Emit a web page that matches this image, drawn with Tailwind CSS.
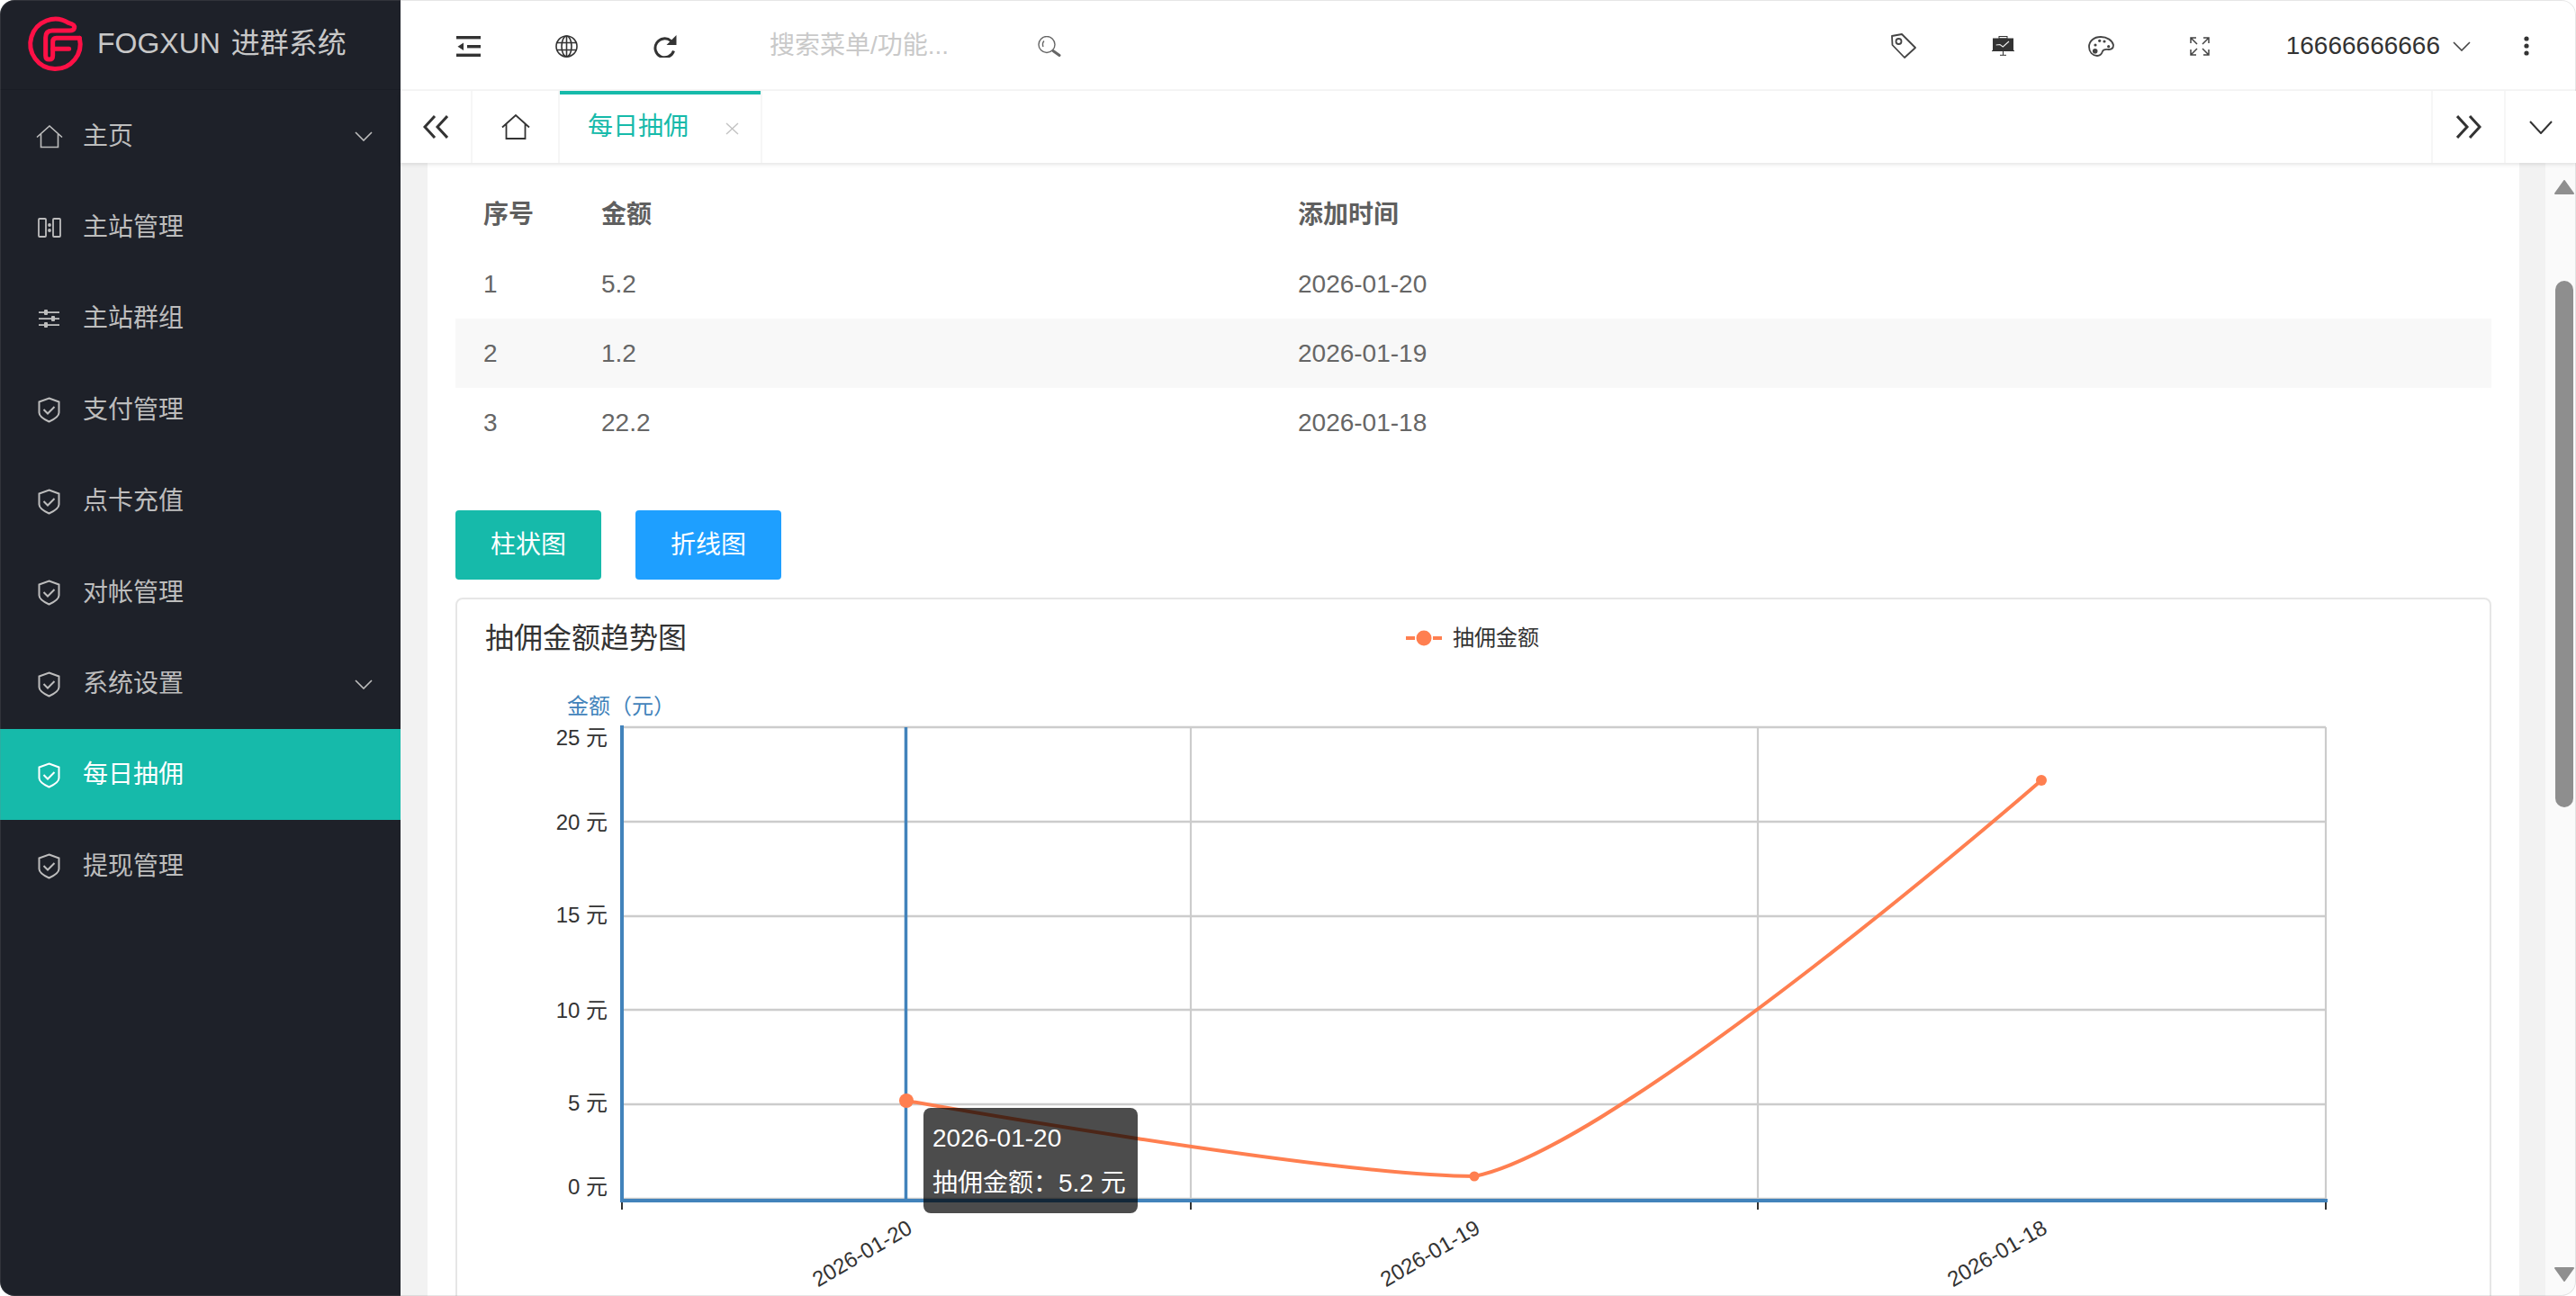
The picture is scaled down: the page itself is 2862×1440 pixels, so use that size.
<!DOCTYPE html>
<html lang="zh-CN">
<head>
    <meta charset="UTF-8">
    <title>每日抽佣</title>
    <script src="https://cdn.jsdelivr.net/npm/@tailwindcss/browser@4"></script>
</head>
<body class="bg-white">
<div class="relative flex w-[2862px] h-[1440px] overflow-hidden rounded-[16px] [font-family:'Liberation_Sans','Noto_Sans_CJK_SC',sans-serif]">

    <!-- sidebar -->
    <aside class="w-[445px] shrink-0 bg-[#1e2129] text-[28px] text-[#bdbdbd]">
        <div class="flex h-[100px] items-center border-b border-[#1a1d24]">
            <svg class="ml-[20px] w-[80px] h-[80px]" viewBox="0 0 240 240" fill="none" stroke="#ff1046" stroke-width="15" stroke-linecap="round" stroke-linejoin="round">
                <path d="M205 97 A83 83 0 1 1 168 46 Q190 52 188 62 Q186 72 172 72 H115 Q92 72 92 95 V155 Q92 168 104 168 Q116 168 116 155 V133 H170"/>
                <path d="M205 97 H128 Q116 97 116 110 V133"/>
            </svg>
            <span class="ml-[8px] mb-[3px] text-[32px] text-[#c8c8c8] [word-spacing:3px]">FOGXUN 进群系统</span>
        </div>
        <nav>
            <a class="flex h-[101.4px] items-center pt-[2px] pl-[40px] pr-[31px]">
                <span class="w-[52px] shrink-0">
                    <svg class="w-[30px] h-[26px]" viewBox="0 0 30 26" fill="none" stroke="currentColor" stroke-width="1.6"><path d="M1 13.5 15 1 29 13.5M5.5 10V24.5H24.5V10"/></svg>
                </span>
                <span>主页</span>
                <svg class="ml-auto w-[20px] h-[11px]" viewBox="0 0 20 11" fill="none" stroke="currentColor" stroke-width="1.6"><path d="M1 1 10 10 19 1"/></svg>
            </a>
            <a class="flex h-[101.4px] items-center pt-[2px] pl-[40px]">
                <span class="w-[52px] shrink-0 pl-[2px]">
                    <svg class="w-[26px] h-[22px]" viewBox="0 0 26 22" fill="none" stroke="currentColor" stroke-width="1.8"><rect x="1" y="1" width="8" height="20" rx="1"/><rect x="17" y="1" width="8" height="20" rx="1"/><circle cx="13" cy="8" r="1" fill="currentColor"/><circle cx="13" cy="14" r="1" fill="currentColor"/></svg>
                </span>
                <span>主站管理</span>
            </a>
            <a class="flex h-[101.4px] items-center pt-[2px] pl-[40px]">
                <span class="w-[52px] shrink-0 pl-[3px]">
                    <svg class="w-[23px] h-[20px]" viewBox="0 0 23 20" fill="currentColor"><rect y="2.2" width="23" height="1.8"/><rect y="9.2" width="23" height="1.8"/><rect y="16.2" width="23" height="1.8"/><rect x="6" y="0" width="4" height="6" rx="1"/><rect x="14" y="7" width="4" height="6" rx="1"/><rect x="6" y="14" width="4" height="6" rx="1"/></svg>
                </span>
                <span>主站群组</span>
            </a>
            <a class="flex h-[101.4px] items-center pt-[2px] pl-[40px]">
                <span class="w-[52px] shrink-0 pl-[2px]">
                    <svg class="w-[25px] h-[29px]" viewBox="0 0 25 29" fill="none" stroke="currentColor" stroke-width="2"><path d="M12.5 1.5 23.5 5.5V17.5C23.5 21.5 18 25 12.5 27.5 7 25 1.5 21.5 1.5 17.5V5.5Z"/><path d="M6.5 14 11 18.5 18.5 11"/></svg>
                </span>
                <span>支付管理</span>
            </a>
            <a class="flex h-[101.4px] items-center pt-[2px] pl-[40px]">
                <span class="w-[52px] shrink-0 pl-[2px]">
                    <svg class="w-[25px] h-[29px]" viewBox="0 0 25 29" fill="none" stroke="currentColor" stroke-width="2"><path d="M12.5 1.5 23.5 5.5V17.5C23.5 21.5 18 25 12.5 27.5 7 25 1.5 21.5 1.5 17.5V5.5Z"/><path d="M6.5 14 11 18.5 18.5 11"/></svg>
                </span>
                <span>点卡充值</span>
            </a>
            <a class="flex h-[101.4px] items-center pt-[2px] pl-[40px]">
                <span class="w-[52px] shrink-0 pl-[2px]">
                    <svg class="w-[25px] h-[29px]" viewBox="0 0 25 29" fill="none" stroke="currentColor" stroke-width="2"><path d="M12.5 1.5 23.5 5.5V17.5C23.5 21.5 18 25 12.5 27.5 7 25 1.5 21.5 1.5 17.5V5.5Z"/><path d="M6.5 14 11 18.5 18.5 11"/></svg>
                </span>
                <span>对帐管理</span>
            </a>
            <a class="flex h-[101.4px] items-center pt-[2px] pl-[40px] pr-[31px]">
                <span class="w-[52px] shrink-0 pl-[2px]">
                    <svg class="w-[25px] h-[29px]" viewBox="0 0 25 29" fill="none" stroke="currentColor" stroke-width="2"><path d="M12.5 1.5 23.5 5.5V17.5C23.5 21.5 18 25 12.5 27.5 7 25 1.5 21.5 1.5 17.5V5.5Z"/><path d="M6.5 14 11 18.5 18.5 11"/></svg>
                </span>
                <span>系统设置</span>
                <svg class="ml-auto w-[20px] h-[11px]" viewBox="0 0 20 11" fill="none" stroke="currentColor" stroke-width="1.6"><path d="M1 1 10 10 19 1"/></svg>
            </a>
            <a class="flex h-[101.4px] items-center pt-[2px] pl-[40px] bg-[#16baaa] text-white">
                <span class="w-[52px] shrink-0 pl-[2px]">
                    <svg class="w-[25px] h-[29px]" viewBox="0 0 25 29" fill="none" stroke="currentColor" stroke-width="2"><path d="M12.5 1.5 23.5 5.5V17.5C23.5 21.5 18 25 12.5 27.5 7 25 1.5 21.5 1.5 17.5V5.5Z"/><path d="M6.5 14 11 18.5 18.5 11"/></svg>
                </span>
                <span>每日抽佣</span>
            </a>
            <a class="flex h-[101.4px] items-center pt-[2px] pl-[40px]">
                <span class="w-[52px] shrink-0 pl-[2px]">
                    <svg class="w-[25px] h-[29px]" viewBox="0 0 25 29" fill="none" stroke="currentColor" stroke-width="2"><path d="M12.5 1.5 23.5 5.5V17.5C23.5 21.5 18 25 12.5 27.5 7 25 1.5 21.5 1.5 17.5V5.5Z"/><path d="M6.5 14 11 18.5 18.5 11"/></svg>
                </span>
                <span>提现管理</span>
            </a>
        </nav>
    </aside>

    <main class="flex min-w-0 flex-1 flex-col bg-[#f2f2f2]">
        <!-- top bar -->
        <header class="flex h-[101px] shrink-0 items-center border-b-2 border-[#f6f6f6] bg-white pt-[3px] pr-[52px] pl-[62px] text-[#333]">
            <svg class="w-[27px] h-[23px]" viewBox="0 0 27 23" fill="currentColor"><rect width="27" height="3.4" y="0"/><rect x="12" y="10" width="15" height="3.4"/><rect y="19.6" width="27" height="3.4"/><path d="M1.5 11.7 8 7.5V16Z"/></svg>
            <svg class="ml-[83px] w-[25px] h-[25px]" viewBox="0 0 25 25" fill="none" stroke="currentColor" stroke-width="1.6"><circle cx="12.5" cy="12.5" r="11.5"/><ellipse cx="12.5" cy="12.5" rx="5.5" ry="11.5"/><path d="M12.5 1V24M1.5 8.5H23.5M1.5 16.5H23.5"/></svg>
            <svg class="ml-[84px] w-[26px] h-[25px]" viewBox="0 0 26 25"><path d="M22.5 17.5A10.5 10.5 0 1 1 19.5 6.5" fill="none" stroke="currentColor" stroke-width="3"/><path d="M25.5 0V11H14.5Z" fill="currentColor"/></svg>
            <span class="ml-[103px] w-[200px] shrink-0 text-[28px] text-[#c9c9c9]">搜索菜单/功能...</span>
            <svg class="ml-[98px] w-[26px] h-[23px]" viewBox="0 0 26 23" fill="none" stroke="#666" stroke-width="1.4"><circle cx="10" cy="9.5" r="9"/><path d="M7 5.5Q4.5 8 6 12"/><path d="M17 16.5 24 21.5" stroke-width="3" stroke-linecap="round"/></svg>

            <svg class="ml-auto w-[28px] h-[28px]" viewBox="0 0 28 28" fill="none" stroke="#444" stroke-width="1.8" stroke-linejoin="round"><path d="M1 3 12 1 27 16 15 27 1.5 13Z"/><circle cx="8.5" cy="9" r="3"/></svg>
            <svg class="ml-[84px] w-[25px] h-[22px]" viewBox="0 0 25 22"><rect x="8" y="0.5" width="9" height="2.5" fill="none" stroke="#333"/><rect x="1" y="2.5" width="23" height="13.5" fill="#333"/><path d="M0 16.5H25M12.5 17V21M9 21.3H16" stroke="#333" fill="none"/><path d="M4.7 10 9 9.5 12.3 12 19 6" stroke="#eee" stroke-width="1.1" fill="none"/></svg>
            <svg class="ml-[82px] w-[29px] h-[23px]" viewBox="0 0 29 23" fill="none" stroke="#444" stroke-width="1.8"><path d="M14 1C6 1 1 6 1 12 1 18 5 22 10 22 13 22 15 20 16 17 17 14 20 15 23 15 26 15 28 13 28 10 27 5 21 1 14 1Z"/><g fill="#444" stroke="none"><circle cx="8" cy="10" r="1.6"/><circle cx="12.7" cy="5.3" r="1.6"/><circle cx="18" cy="6" r="1.6"/><circle cx="22.7" cy="11.7" r="1.6"/><circle cx="7.7" cy="16.7" r="2.8"/></g></svg>
            <svg class="ml-[84px] w-[22px] h-[21px]" viewBox="0 0 22 21" fill="none" stroke="#444" stroke-width="1.5"><path d="M1 7V1H7M1 1 8 8M15 1H21V7M21 1 14 8M1 14V20H7M1 20 8 13M15 20H21V14M21 20 14 13"/></svg>
            <span class="ml-[85px] text-[28px] text-[#333]">16666666666</span>
            <svg class="ml-[14px] w-[20px] h-[11px]" viewBox="0 0 20 11" fill="none" stroke="#444" stroke-width="1.6"><path d="M1 1 10 10 19 1"/></svg>
            <svg class="ml-[59px] w-[6px] h-[22px]" viewBox="0 0 6 22" fill="#333"><circle cx="3" cy="3" r="2.6"/><circle cx="3" cy="11" r="2.6"/><circle cx="3" cy="19" r="2.6"/></svg>
        </header>

        <!-- tabs -->
        <div class="relative z-10 flex h-[80px] shrink-0 items-stretch bg-white text-[28px] shadow-[0_2px_4px_rgba(0,0,0,0.1)]">
            <button class="flex w-[80px] items-center justify-center border-r-2 border-[#f6f6f6]">
                <svg class="w-[28px] h-[26px]" viewBox="0 0 28 26" fill="none" stroke="#333" stroke-width="3"><path d="M13 1 2 13 13 25M27 1 16 13 27 25"/></svg>
            </button>
            <div class="flex w-[97px] items-center justify-center border-r-2 border-[#f6f6f6]">
                <svg class="w-[32px] h-[28px]" viewBox="0 0 32 28" fill="none" stroke="#333" stroke-width="1.8"><path d="M1 14.5 16 1 31 14.5M5.5 11V27H26.5V11"/></svg>
            </div>
            <div class="flex w-[225px] items-center border-r-2 border-[#f6f6f6] pl-[31px] text-[#16baaa] shadow-[inset_0_4px_0_#16baaa]">
                <span>每日抽佣</span>
                <svg class="ml-[40px] mt-[4px] w-[17px] h-[14px]" viewBox="0 0 17 14" fill="none" stroke="#c2c2c2" stroke-width="1.4"><path d="M2 1 15 13M15 1 2 13"/></svg>
            </div>
            <button class="ml-auto flex w-[81px] items-center justify-center border-l-2 border-[#f6f6f6]">
                <svg class="w-[28px] h-[26px]" viewBox="0 0 28 26" fill="none" stroke="#333" stroke-width="3"><path d="M1 1 12 13 1 25M15 1 26 13 15 25"/></svg>
            </button>
            <button class="flex w-[80px] items-center justify-center border-l-2 border-[#f6f6f6]">
                <svg class="w-[26px] h-[15px]" viewBox="0 0 26 15" fill="none" stroke="#333" stroke-width="2"><path d="M1 1 13 14 25 1"/></svg>
            </button>
        </div>

        <!-- content -->
        <div class="flex min-h-0 flex-1 pl-[30px]">
            <div class="w-[2324px] shrink-0 overflow-hidden bg-white px-[31px] pt-[19px]">
                <table class="w-full table-fixed text-left text-[28px] text-[#666]">
                    <colgroup><col class="w-[131px]"><col class="w-[774px]"><col></colgroup>
                    <thead>
                        <tr class="h-[77px] font-bold text-[#5f5f5f]"><th class="pl-[31px]">序号</th><th class="pl-[31px]">金额</th><th class="pl-[31px]">添加时间</th></tr>
                    </thead>
                    <tbody>
                        <tr class="h-[77px]"><td class="pl-[31px]">1</td><td class="pl-[31px]">5.2</td><td class="pl-[31px]">2026-01-20</td></tr>
                        <tr class="h-[77px] bg-[#f8f8f8]"><td class="pl-[31px]">2</td><td class="pl-[31px]">1.2</td><td class="pl-[31px]">2026-01-19</td></tr>
                        <tr class="h-[77px]"><td class="pl-[31px]">3</td><td class="pl-[31px]">22.2</td><td class="pl-[31px]">2026-01-18</td></tr>
                    </tbody>
                </table>

                <div class="mt-[59px] flex gap-[38px] text-[28px] text-white">
                    <button class="h-[77px] w-[162px] rounded-[4px] bg-[#16baaa]">柱状图</button>
                    <button class="h-[77px] w-[162px] rounded-[4px] bg-[#1e9fff]">折线图</button>
                </div>

                <div class="relative mt-[20px] h-[900px] rounded-[8px] border-2 border-[#e6e6e6]">
                    <div class="flex h-[86px] items-center pl-[31px]">
                        <span class="text-[32px] text-[#333]">抽佣金额趋势图</span>
                        <span class="ml-[799px] flex items-center text-[24px] text-[#333]">
                            <svg class="w-[40px] h-[18px]" viewBox="0 0 40 18"><path d="M0 9H10M30 9H40" stroke="#ff7f50" stroke-width="4"/><circle cx="20" cy="9" r="8.5" fill="#ff7f50"/></svg>
                            <span class="ml-[12px]">抽佣金额</span>
                        </span>
                    </div>

                    <svg class="block w-[2257px] h-[700px]" viewBox="508 752 2257 700" fill="none">
                        <!-- grid -->
                        <g stroke="#ccc">
                            <path d="M691 808H2584M691 913H2584M691 1018H2584M691 1122H2584M691 1227H2584M691 1332H2584" stroke-width="2.6"/>
                            <path d="M1323 808V1332M1953 808V1332M2584 808V1332" stroke-width="2.2"/>
                        </g>
                        <!-- axes -->
                        <g stroke="#4283bb">
                            <path d="M691 806V1336" stroke-width="4"/>
                            <path d="M689 1334H2586" stroke-width="4"/>
                            <path d="M1006.5 808V1332" stroke-width="3.5"/>
                        </g>
                        <path d="M691 1336V1344M1323 1336V1344M1953 1336V1344M2584 1336V1344" stroke="#333" stroke-width="2"/>
                        <!-- y labels -->
                        <g fill="#333" font-size="24" text-anchor="end">
                            <text x="675" y="828">25 元</text>
                            <text x="675" y="922">20 元</text>
                            <text x="675" y="1025">15 元</text>
                            <text x="675" y="1131">10 元</text>
                            <text x="675" y="1234">5 元</text>
                            <text x="675" y="1327">0 元</text>
                        </g>
                        <text x="630" y="793" fill="#4283bb" font-size="24">金额（元）</text>
                        <!-- x labels -->
                        <g fill="#333" font-size="24" text-anchor="end">
                            <text transform="translate(1015 1369) rotate(-30)">2026-01-20</text>
                            <text transform="translate(1646 1369) rotate(-30)">2026-01-19</text>
                            <text transform="translate(2276 1369) rotate(-30)">2026-01-18</text>
                        </g>
                        <!-- series -->
                        <path d="M1007 1223C1007 1223 1480 1307 1638 1307C1800 1275 2268 867 2268 867" stroke="#ff7f50" stroke-width="4"/>
                        <circle cx="1007" cy="1223" r="8" fill="#ff7f50"/>
                        <circle cx="1638" cy="1307" r="5.5" fill="#ff7f50"/>
                        <circle cx="2268" cy="867" r="6" fill="#ff7f50"/>
                    </svg>

                    <!-- tooltip -->
                    <div class="absolute left-[518px] top-[565px] w-[238px] h-[117px] rounded-[8px] bg-black/70 px-[10px] pt-[10px] text-[28px] leading-[48px] text-white whitespace-nowrap">
                        <div>2026-01-20</div>
                        <div class="mt-[2px]">抽佣金额：5.2 元</div>
                    </div>
                </div>
            </div>

            <div class="w-[29px] shrink-0"></div>

            <!-- scrollbar -->
            <div class="flex w-[34px] shrink-0 flex-col items-center bg-[#fafafa] pt-[19px] pb-[16px] pl-[11px] pr-[3px]">
                <svg class="w-[22px] h-[16px] shrink-0" viewBox="0 0 22 16" fill="#8f8f8f" stroke="#8f8f8f" stroke-width="2" stroke-linejoin="round"><path d="M11 1 21 15H1Z"/></svg>
                <div class="mt-[96px] h-[585px] w-[20px] shrink-0 rounded-full bg-[#8e8e8e]"></div>
                <svg class="mt-auto w-[22px] h-[16px] shrink-0" viewBox="0 0 22 16" fill="#8f8f8f" stroke="#8f8f8f" stroke-width="2" stroke-linejoin="round"><path d="M11 15 21 1H1Z"/></svg>
            </div>
        </div>
    </main>

    <div class="pointer-events-none absolute inset-0 rounded-[16px] shadow-[inset_0_0_0_1px_rgba(128,128,128,0.2)]"></div>
</div>
</body>
</html>
